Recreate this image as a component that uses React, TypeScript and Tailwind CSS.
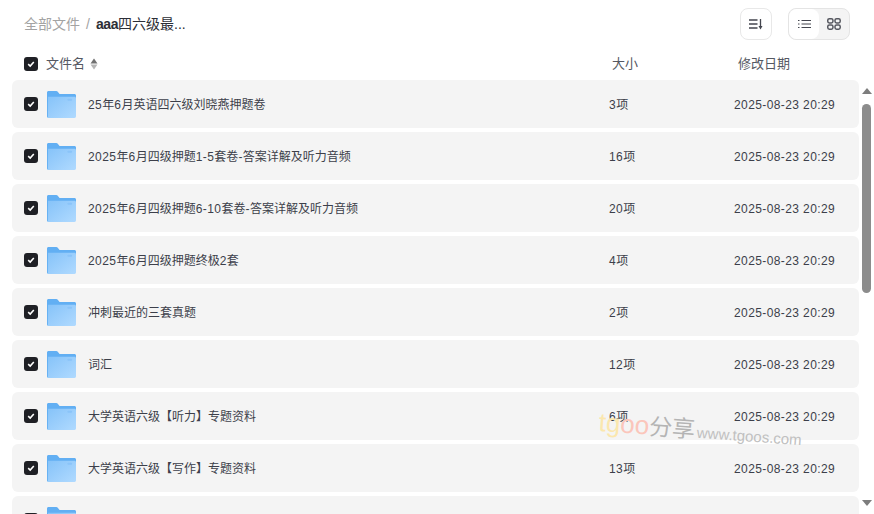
import React, { FC } from 'react';

const rows = [
  { name: '25年6月英语四六级刘晓燕押题卷', size: '3项' },
  { name: '2025年6月四级押题1-5套卷-答案详解及听力音频', size: '16项' },
  { name: '2025年6月四级押题6-10套卷-答案详解及听力音频', size: '20项' },
  { name: '2025年6月四级押题终极2套', size: '4项' },
  { name: '冲刺最近的三套真题', size: '2项' },
  { name: '词汇', size: '12项' },
  { name: '大学英语六级【听力】专题资料', size: '6项' },
  { name: '大学英语六级【写作】专题资料', size: '13项' },
  { name: '', size: '' },
];

// digits in the shot are a little wider than Liberation's, so space those runs out
const Spaced: FC<{ text: string }> = ({ text }) => (
  <>
    {text.split(/([0-9-]+)/).map((part, i) =>
      /^[0-9-]+$/.test(part) ? (
        <span key={i} className="tracking-[0.45px]">
          {part}
        </span>
      ) : (
        part
      ),
    )}
  </>
);

const Check: FC = () => (
  <span className="flex h-[14px] w-[14px] shrink-0 items-center justify-center rounded-[3px] bg-[#1f2025]">
    <svg width="8" height="8" viewBox="0 0 8 8" fill="none">
      <path d="M1.200 4.200 3.200 6 6.800 2" stroke="#fff" strokeWidth="1.600" />
    </svg>
  </span>
);

const Folder: FC = () => (
  <svg width="29" height="27" viewBox="0 0 30 28" preserveAspectRatio="none" className="mt-[1px] block shrink-0">
    <defs>
      <linearGradient id="folderFront" x1="0" y1="0" x2="1" y2="1">
        <stop offset="0" stopColor="#86c3f9" />
        <stop offset="1" stopColor="#b0daff" />
      </linearGradient>
    </defs>
    <path d="M0 1.500C0 .7.7 0 1.500 0h8.200c.5 0 .9.2 1.200.6L13 3h15.500c.8 0 1.500.7 1.500 1.500V12H1v16h.5C.7 28 0 27.300 0 26.500z" fill="#62aff3" />
    <path d="M1 6h27.500c.8 0 1.500.7 1.500 1.500v19c0 .8-.7 1.500-1.500 1.500H1z" fill="url(#folderFront)" />
    <rect x="21" y="8" width="5" height="2" rx="1" fill="#8ac4f9" />
  </svg>
);

const SortArrows: FC = () => (
  <svg width="8" height="12" viewBox="0 0 8 12" className="ml-[5px]">
    <path d="M4 .5 7.500 5.400H.5z" fill="#707070" />
    <path d="M4 11.500 .5 6.600h7z" fill="#b5b5b5" />
  </svg>
);

const App: FC = () => {
  return (
    <div
      className="relative h-[514px] w-[874px] overflow-hidden bg-white text-[12px] text-[#3c3f4a]"
      style={{ fontFamily: '"Liberation Sans", "Noto Sans CJK SC", sans-serif' }}
    >
      <header className="flex h-[48px] items-center justify-between pl-[24px] pr-[24px]">
        <div className="flex items-center text-[14px]">
          <span className="text-[#a3a3a3]">全部文件</span>
          <span className="mx-[6px] text-[#a3a3a3]">/</span>
          <span className="text-[#2c2e36]">
            <span className="font-semibold tracking-[-0.4px]">aaa</span>四六级最...
          </span>
        </div>
        <div className="flex items-center gap-[16px]">
          <button className="flex h-[32px] w-[32px] items-center justify-center rounded-[8px] border border-[#e8e8e8] bg-white">
            <svg width="14" height="12" viewBox="0 0 14 12" fill="none" stroke="#44464f" strokeWidth="1.300">
              <path d="M0 2h8.500M0 6h8.500M0 10h8.500M11.500 1v8" />
              <path d="M9.500 8 11.500 11.500 13.500 8z" fill="#44464f" stroke="none" />
            </svg>
          </button>
          <div className="flex h-[32px] w-[62px] rounded-[8px] border border-[#e4e4e4] bg-[#f4f4f4]">
            <span className="flex w-[31px] items-center justify-center rounded-[8px] bg-white">
              <svg width="13" height="10" viewBox="0 0 13 10" fill="none" stroke="#44464f" strokeWidth="1.200">
                <path d="M0 1.500h1.500M0 5h1.500M0 8.500h1.500M3.500 1.500H13M3.500 5H13M3.500 8.500H13" />
              </svg>
            </span>
            <span className="flex w-[31px] items-center justify-center">
              <svg width="14" height="12" viewBox="0 0 14 12" fill="none" stroke="#55575f" strokeWidth="1.500">
                <rect x=".75" y=".75" width="5.200" height="4.200" rx="1.600" />
                <rect x="8" y=".75" width="5.200" height="4.200" rx="1.600" />
                <rect x=".75" y="7" width="5.200" height="4.200" rx="1.600" />
                <rect x="8" y="7" width="5.200" height="4.200" rx="1.600" />
              </svg>
            </span>
          </div>
        </div>
      </header>

      <div className="flex h-[32px] items-center pl-[24px] text-[13px] text-[#555862]">
        <Check />
        <span className="ml-[8px] flex w-[566px] items-center">
          文件名
          <SortArrows />
        </span>
        <span className="w-[126px]">大小</span>
        <span>修改日期</span>
      </div>

      <div className="flex">
        <ul className="flex w-[859px] shrink-0 flex-col gap-[4px] pl-[12px]">
          {rows.map((row, i) => (
            <li key={i} className="flex h-[48px] items-center rounded-[6px] bg-[#f4f4f4] pl-[12px]">
              <Check />
              <span className="ml-[9px]">
                <Folder />
              </span>
              <span className="ml-[12px] w-[521px] truncate pt-[2px]">
                <Spaced text={row.name} />
              </span>
              {row.name && (
                <>
                  <span className="w-[125px] pt-[2px]">
                    <Spaced text={row.size} />
                  </span>
                  <span className="pt-[2px] tracking-[0.4px]">2025-08-23 20:29</span>
                </>
              )}
            </li>
          ))}
        </ul>
        <div className="relative h-[434px] w-[15px]">
          <svg width="10" height="6" viewBox="0 0 10 6" className="absolute left-[3px] top-[8px]">
            <path d="M5 0 10 6H0z" fill="#7d7d7d" />
          </svg>
          <div className="absolute left-[3px] top-[24px] h-[189px] w-[9px] rounded-full bg-[#8c8c8c]" />
          <svg width="10" height="6" viewBox="0 0 10 6" className="absolute bottom-[8px] left-[3px]">
            <path d="M5 6 0 0h10z" fill="#7d7d7d" />
          </svg>
        </div>
      </div>

      <div className="pointer-events-none absolute left-[600px] top-[405px] flex origin-top-left rotate-[4deg] items-baseline">
        <span className="text-[26px] leading-[34px]">
          <span className="text-[#fbe7ae]">tg</span>
          <span className="text-[#fbc6bb]">oo</span>
        </span>
        <span className="text-[23px] text-[#b4b4b4]">分享</span>
        <span className="ml-[2px] text-[15px] text-[#c0c0c0]">www.tgoos.com</span>
      </div>
    </div>
  );
};

export default App;
